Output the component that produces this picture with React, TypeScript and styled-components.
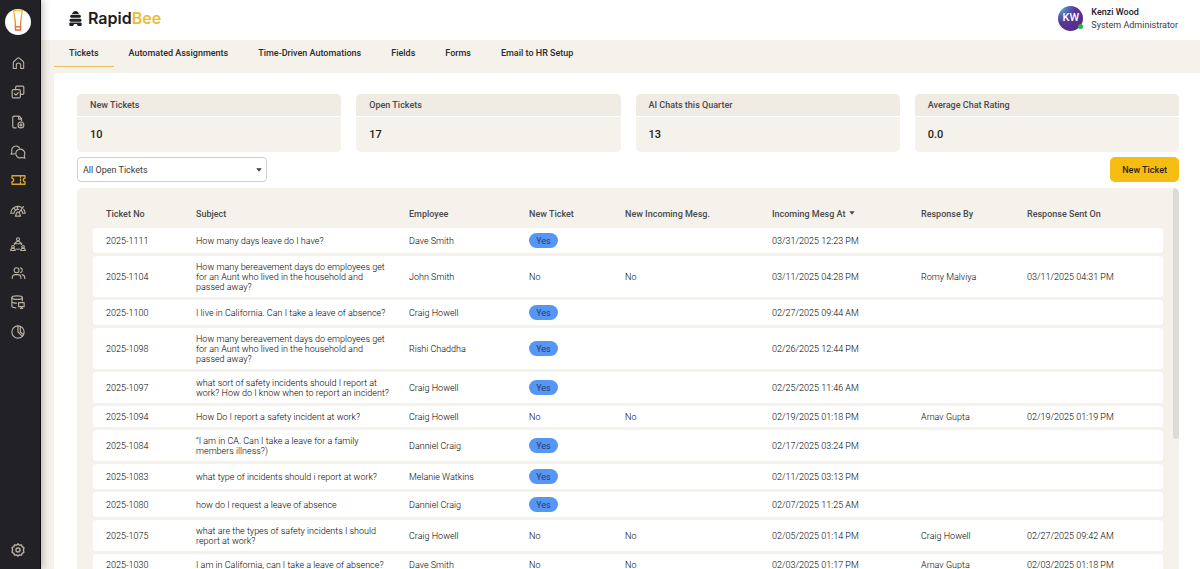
import React from "react";
import styled, { createGlobalStyle } from "styled-components";

const GlobalStyle = createGlobalStyle`
  *, *::before, *::after { box-sizing: border-box; }
  html, body, #root { height: 100%; }
  body {
    margin: 0;
    background: #f5f2eb;
    color: #3c3c40;
    font-family: Roboto, "Liberation Sans", sans-serif;
    font-size: 9px;
    line-height: 10px;
  }
  button, select { font: inherit; color: inherit; }
`;

const Shell = styled.div`
  display: flex;
  height: 100vh;
  overflow: hidden;
`;

const Sidebar = styled.aside`
  position: relative;
  z-index: 1;
  display: flex;
  flex-direction: column;
  align-items: center;
  flex: 0 0 41px;
  padding: 9px 4px 12px 0;
  background: #222126;
  border-right: 1px solid #0c0b0e;
  box-shadow: 2px 0 7px rgba(60, 50, 40, 0.3);
`;

const OrgBadge = styled.a`
  display: block;
  width: 26px;
  height: 26px;
  border-radius: 50%;
  background: #fff;
`;

const Nav = styled.nav`
  display: flex;
  flex: 1;
  flex-direction: column;
  align-items: center;
  gap: 16px;
  margin-top: 22px;
`;

const NavLink = styled.a<{ $active?: boolean }>`
  display: flex;
  color: ${(p) => (p.$active ? "#d9a52c" : "#b9b2a4")};
`;

const Content = styled.div`
  display: flex;
  flex: 1;
  flex-direction: column;
  min-width: 0;
`;

const Header = styled.header`
  display: flex;
  flex: 0 0 40px;
  align-items: center;
  justify-content: space-between;
  padding: 0 22px 4px 28px;
  background: #fff;
`;

const Brand = styled.a`
  display: flex;
  align-items: center;
  gap: 6px;
  color: #1d1c20;
  font-family: Inter, "Liberation Sans", sans-serif;
  font-size: 16px;
  font-weight: 600;
  line-height: 20px;
  text-decoration: none;
`;

const BrandAccent = styled.span`
  color: #ecbc35;
`;

const User = styled.div`
  display: flex;
  align-items: center;
  gap: 8px;
`;

const Avatar = styled.div`
  position: relative;
  width: 25px;
  height: 25px;
  border-radius: 50%;
  background: radial-gradient(circle at 12% 8%, #45b4e0 0, #5669b5 22%, #5a3596 46%, #4b2a80 100%);
  color: #fff;
  font-size: 11px;
  font-weight: 500;
  line-height: 23px;
  text-align: center;
`;

const Presence = styled.span`
  position: absolute;
  right: 0;
  bottom: 2px;
  width: 5px;
  height: 5px;
  border-radius: 50%;
  background: #35a853;
`;

const UserText = styled.div`
  display: flex;
  flex-direction: column;
  gap: 3px;
`;

const UserName = styled.span`
  color: #222;
  font-weight: 500;
`;

const Tabs = styled.nav`
  display: flex;
  flex: 0 0 27px;
  margin: 0 0 6px 13px;
`;

const Tab = styled.a<{ $active?: boolean }>`
  padding: 8px 15px 0;
  border-bottom: 1px solid ${(p) => (p.$active ? "#e8bf5c" : "transparent")};
  color: #2b2a2e;
  font-weight: 500;
  text-decoration: none;
  white-space: nowrap;
`;

const Panel = styled.main`
  display: flex;
  flex: 1;
  flex-direction: column;
  min-height: 0;
  margin-left: 13px;
  padding: 21px 21px 0 23px;
  border-radius: 4px 0 0 0;
  background: #fff;
`;

const Stats = styled.section`
  display: grid;
  flex: none;
  grid-template-columns: repeat(4, 1fr);
  gap: 15px;
`;

const StatCard = styled.article`
  overflow: hidden;
  border-radius: 5px;
  background: #f5f2eb;
`;

const StatTitle = styled.h2`
  margin: 0;
  padding: 6px 13px;
  border-bottom: 1px solid #fff;
  background: #f0ebe3;
  color: #4a494d;
  font-size: 9px;
  font-weight: 500;
  line-height: 10px;
`;

const StatValue = styled.p`
  margin: 0;
  padding: 11px 13px 10px;
  color: #1d1c20;
  font-size: 11px;
  font-weight: 500;
  line-height: 14px;
`;

const Toolbar = styled.div`
  display: flex;
  flex: none;
  align-items: center;
  justify-content: space-between;
  padding: 5px 0 6px;
`;

const SelectBox = styled.div`
  display: grid;
  align-items: center;
  width: 190px;

  > * { grid-area: 1 / 1; }
  > svg { justify-self: end; margin-right: 5px; pointer-events: none; }
`;

const ViewSelect = styled.select`
  appearance: none;
  width: 100%;
  height: 25px;
  padding: 0 5px;
  border: 1px solid #cfcfd4;
  border-radius: 4px;
  background: #fff;
`;

const PrimaryButton = styled.button`
  height: 25px;
  padding: 0 12px;
  border: 0;
  border-radius: 5px;
  background: #f5bd12;
  color: #2b220a;
  font-weight: 500;
`;

const TableArea = styled.section`
  display: flex;
  flex: 1;
  min-height: 0;
  overflow: hidden;
  border-radius: 5px 5px 0 0;
  background: #f5f2eb;
`;

const TableScroll = styled.div`
  flex: 1;
  overflow: hidden;
  padding: 15px 10px 0 16px;
`;

const Track = styled.div`
  flex: 0 0 6px;
`;

const Thumb = styled.div`
  height: 66%;
  border-radius: 3px;
  background: #dddbd8;
`;

const Table = styled.table`
  width: 100%;
  table-layout: fixed;
  border-collapse: separate;
  border-spacing: 0 3px;
`;

const Column = styled.col<{ $width: number }>`
  width: ${(p) => p.$width}px;
`;

const HeadCell = styled.th`
  padding: 3px 4px 6px 13px;
  color: #4a494d;
  font-weight: 500;
  text-align: left;
  white-space: nowrap;

  svg { margin-left: 4px; vertical-align: 2px; }
`;

const Cell = styled.td`
  padding: 6px 4px 5px 13px;
  background: #fff;
  color: #000;
  font-weight: 300;

  &:first-child { border-radius: 3px 0 0 3px; }
  &:last-child { border-radius: 0 3px 3px 0; }
`;

const FlagCell = styled(Cell)`
  padding-top: 5px;
`;

const Pill = styled.span`
  display: block;
  width: 29px;
  padding-top: 1px;
  border-radius: 8px;
  background: #5596f6;
  color: #26406e;
  font-weight: 400;
  line-height: 14px;
  text-align: center;
`;

type IconProps = { w: number; h: number; box?: string; sw?: number; children: React.ReactNode };

const Icon = ({ w, h, box = "0 0 24 24", sw = 2, children }: IconProps) => (
  <svg
    width={w}
    height={h}
    viewBox={box}
    fill="none"
    stroke="currentColor"
    strokeWidth={sw}
    strokeLinecap="round"
    strokeLinejoin="round"
    aria-hidden="true"
  >
    {children}
  </svg>
);

const Caret = () => (
  <svg width="6" height="4" viewBox="0 0 6 4" fill="currentColor" aria-hidden="true">
    <path d="M0.3 0.3h5.4L3 3.7z" />
  </svg>
);

const navItems = [
  {
    label: "Home",
    icon: (
      <Icon w={13} h={12} box="1 1 22 22">
        <path d="M2.5 11.500a3 3 0 0 1 1-2.300L10.400 3a2.400 2.400 0 0 1 3.200 0l6.900 6.200a3 3 0 0 1 1 2.300V22H16v-6a4 4 0 0 0-8 0v6H2.500z" />
      </Icon>
    ),
  },
  {
    label: "Tasks",
    icon: (
      <Icon w={14} h={14}>
        <rect x="2" y="8" width="14" height="14" rx="2" />
        <path d="M8 8V4a2 2 0 0 1 2-2h10a2 2 0 0 1 2 2v10a2 2 0 0 1-2 2h-4M6 15l2.500 2.500L12.500 13" />
      </Icon>
    ),
  },
  {
    label: "Documents",
    icon: (
      <Icon w={14} h={14}>
        <path d="M9 22H5a2 2 0 0 1-2-2V4a2 2 0 0 1 2-2h9l4 4v4M13 2v5h5" />
        <circle cx="17" cy="17" r="5" />
        <circle cx="17" cy="17" r="1.500" />
      </Icon>
    ),
  },
  {
    label: "Chats",
    icon: (
      <Icon w={16} h={14} box="0 0 28 25" sw={2}>
        <path d="M8.500 15.500 1.500 16.500 3.300 12.500A7.500 7.500 0 1 1 17.300 6.500" />
        <path d="M17.500 7.500A7.700 7.700 0 1 0 21 22.200L26.500 23.500 25 19A7.700 7.700 0 0 0 17.500 7.500z" />
      </Icon>
    ),
  },
  {
    label: "Tickets",
    active: true,
    icon: (
      <Icon w={15} h={10} box="0 0 30 20" sw={2.6}>
        <path d="M2 1.500h26v5a3.500 3.500 0 0 0 0 7v5H2v-5a3.500 3.500 0 0 0 0-7z" />
        <path d="M19 2v16" strokeDasharray="3 3.500" />
      </Icon>
    ),
  },
  {
    label: "Performance",
    icon: (
      <Icon w={16} h={20} box="0 0 28 28" sw={2}>
        <path d="M1.500 18A12.500 12.500 0 0 1 20 7.500M24 11a12.500 12.500 0 0 1 2.500 7h-4M1.500 18H7a7 7 0 0 1 8-6.800M7 9l2.500 3.500M13 6.500V10M23.500 6.500 15.500 17M9.500 23h9l-2-5.500a2.700 2.700 0 0 0-5 0zM20 13a8 8 0 0 1 2 5" />
      </Icon>
    ),
  },
  {
    label: "Organization",
    icon: (
      <Icon w={16} h={14} box="0 0 28 25" sw={2}>
        <circle cx="14" cy="4" r="2.700" />
        <circle cx="5" cy="17.500" r="2.300" />
        <circle cx="23" cy="17.500" r="2.300" />
        <path d="M9.500 12a4.500 4.500 0 0 1 9 0zM1 24a4 4 0 0 1 8 0zM19 24a4 4 0 0 1 8 0zM7.500 11v2.500M20.500 11v2.500M11.500 21.500a7 7 0 0 0 5 0" />
      </Icon>
    ),
  },
  {
    label: "People",
    icon: (
      <Icon w={15} h={12} box="0 1 27 22">
        <circle cx="10" cy="7" r="4.500" />
        <path d="M2 22v-1a6 6 0 0 1 6-6h4a6 6 0 0 1 6 6v1M17 2.600a4.500 4.500 0 0 1 0 8.800M20 15a6 6 0 0 1 5 6v1" />
      </Icon>
    ),
  },
  {
    label: "Data",
    icon: (
      <Icon w={14} h={14}>
        <ellipse cx="10.500" cy="4.500" rx="9" ry="3" />
        <path d="M1.500 4.500V19c0 1.700 3 2.800 7 3M19.500 4.500V10M1.500 11.500c1 2 4 2.500 8 2.500" />
        <path d="M13 13h9.500v7H13zM16 23h4M18 20v3" />
      </Icon>
    ),
  },
  {
    label: "Reports",
    icon: (
      <Icon w={14} h={14}>
        <circle cx="12" cy="12" r="10.500" />
        <path d="M12 1.500V12l7.500 7.500M16 2.500V12l5 4" />
      </Icon>
    ),
  },
];

const tabs = [
  "Tickets",
  "Automated Assignments",
  "Time-Driven Automations",
  "Fields",
  "Forms",
  "Email to HR Setup",
];

const stats = [
  ["New Tickets", "10"],
  ["Open Tickets", "17"],
  ["AI Chats this Quarter", "13"],
  ["Average Chat Rating", "0.0"],
];

const columns = [
  { label: "Ticket No", width: 90 },
  { label: "Subject", width: 213 },
  { label: "Employee", width: 120 },
  { label: "New Ticket", width: 96 },
  { label: "New Incoming Mesg.", width: 147 },
  { label: "Incoming Mesg At", width: 149, sorted: true },
  { label: "Response By", width: 106 },
  { label: "Response Sent On", width: 149 },
];

type Ticket = {
  no: string;
  subject: string;
  employee: string;
  received: string;
  responder?: string;
  sent?: string;
};

const tickets: Ticket[] = [
  { no: "2025-1111", subject: "How many days leave do I have?", employee: "Dave Smith", received: "03/31/2025 12:23 PM" },
  {
    no: "2025-1104",
    subject: "How many bereavement days do employees get for an Aunt who lived in the household and passed away?",
    employee: "John Smith",
    received: "03/11/2025 04:28 PM",
    responder: "Romy Malviya",
    sent: "03/11/2025 04:31 PM",
  },
  { no: "2025-1100", subject: "I live in California. Can I take a leave of absence?", employee: "Craig Howell", received: "02/27/2025 09:44 AM" },
  {
    no: "2025-1098",
    subject: "How many bereavement days do employees get for an Aunt who lived in the household and passed away?",
    employee: "Rishi Chaddha",
    received: "02/26/2025 12:44 PM",
  },
  {
    no: "2025-1097",
    subject: "what sort of safety incidents should I report at work? How do I know when to report an incident?",
    employee: "Craig Howell",
    received: "02/25/2025 11:46 AM",
  },
  {
    no: "2025-1094",
    subject: "How Do I report a safety incident at work?",
    employee: "Craig Howell",
    received: "02/19/2025 01:18 PM",
    responder: "Arnav Gupta",
    sent: "02/19/2025 01:19 PM",
  },
  { no: "2025-1084", subject: "“I am in CA. Can I take a leave for a family members illness?)", employee: "Danniel Craig", received: "02/17/2025 03:24 PM" },
  { no: "2025-1083", subject: "what type of incidents should i report at work?", employee: "Melanie Watkins", received: "02/11/2025 03:13 PM" },
  { no: "2025-1080", subject: "how do I request a leave of absence", employee: "Danniel Craig", received: "02/07/2025 11:25 AM" },
  {
    no: "2025-1075",
    subject: "what are the types of safety incidents I should report at work?",
    employee: "Craig Howell",
    received: "02/05/2025 01:14 PM",
    responder: "Craig Howell",
    sent: "02/27/2025 09:42 AM",
  },
  {
    no: "2025-1030",
    subject: "I am in California, can I take a leave of absence?",
    employee: "Dave Smith",
    received: "02/03/2025 01:17 PM",
    responder: "Arnav Gupta",
    sent: "02/03/2025 01:18 PM",
  },
];

const OrgMark = () => (
  <svg width="26" height="26" viewBox="0 0 26 26" fill="none" aria-hidden="true">
    <defs>
      <linearGradient id="org" x1="0" y1="0" x2="0" y2="22" gradientUnits="userSpaceOnUse">
        <stop offset="0.1" stopColor="#f2c43a" />
        <stop offset="1" stopColor="#e8603a" />
      </linearGradient>
    </defs>
    <path
      d="M8.700 1.500h8.600L15.600 14v7h-5.200v-7zM10.500 17.800h5"
      stroke="url(#org)"
      strokeWidth="1.400"
      strokeLinejoin="round"
    />
  </svg>
);

const HiveMark = () => (
  <svg width="13" height="15" viewBox="0 0 39 46" fill="#1d1c20" preserveAspectRatio="none" aria-hidden="true">
    <path d="M9 9C11 3 15 0 19.500 0S28 3 30 9z" />
    <path d="M8 11.500h23a4.500 4.500 0 0 1 0 9.500H8a4.500 4.500 0 0 1 0-9.500z" />
    <path d="M5 23.500h29a5 5 0 0 1 0 9.500H5a5 5 0 0 1 0-9.500z" />
    <path d="M4 35.500h31a3 3 0 0 1 3 3V43a3 3 0 0 1-3 3h-9c0-4-2-6-6.500-6S13 42 13 46H4a3 3 0 0 1-3-3v-4.500a3 3 0 0 1 3-3z" />
  </svg>
);

export default function App() {
  return (
    <>
      <GlobalStyle />
      <Shell>
        <Sidebar>
          <OrgBadge href="#" aria-label="Organization home">
            <OrgMark />
          </OrgBadge>
          <Nav aria-label="Main">
            {navItems.map((item) => (
              <NavLink key={item.label} href="#" aria-label={item.label} $active={item.active}>
                {item.icon}
              </NavLink>
            ))}
          </Nav>
          <NavLink href="#" aria-label="Settings">
            <Icon w={14} h={14} sw={2.4}>
              <path d="M12 1.500l2.500 2.200 3.400-.5 1.200 3.200 3 1.700-.8 3.900.8 3.900-3 1.700-1.200 3.200-3.400-.5-2.500 2.200-2.500-2.200-3.400.5-1.200-3.200-3-1.700.8-3.900-.8-3.900 3-1.700 1.200-3.200 3.400.5z" />
              <circle cx="12" cy="12" r="3.500" />
            </Icon>
          </NavLink>
        </Sidebar>
        <Content>
          <Header>
            <Brand href="#">
              <HiveMark />
              <span>
                Rapid<BrandAccent>Bee</BrandAccent>
              </span>
            </Brand>
            <User>
              <Avatar>
                KW
                <Presence />
              </Avatar>
              <UserText>
                <UserName>Kenzi Wood</UserName>
                <span>System Administrator</span>
              </UserText>
            </User>
          </Header>
          <Tabs aria-label="Ticket sections">
            {tabs.map((tab, i) => (
              <Tab key={tab} href="#" $active={i === 0}>
                {tab}
              </Tab>
            ))}
          </Tabs>
          <Panel>
            <Stats>
              {stats.map(([title, value]) => (
                <StatCard key={title}>
                  <StatTitle>{title}</StatTitle>
                  <StatValue>{value}</StatValue>
                </StatCard>
              ))}
            </Stats>
            <Toolbar>
              <SelectBox>
                <ViewSelect aria-label="Ticket view">
                  <option>All Open Tickets</option>
                </ViewSelect>
                <Caret />
              </SelectBox>
              <PrimaryButton type="button">New Ticket</PrimaryButton>
            </Toolbar>
            <TableArea>
              <TableScroll>
                <Table>
                  <colgroup>
                    {columns.map((c) => (
                      <Column key={c.label} $width={c.width} />
                    ))}
                  </colgroup>
                  <thead>
                    <tr>
                      {columns.map((c) => (
                        <HeadCell key={c.label} scope="col">
                          {c.label}
                          {c.sorted && <Caret />}
                        </HeadCell>
                      ))}
                    </tr>
                  </thead>
                  <tbody>
                    {tickets.map((t) => (
                      <tr key={t.no}>
                        <Cell>{t.no}</Cell>
                        <Cell>{t.subject}</Cell>
                        <Cell>{t.employee}</Cell>
                        <FlagCell>{t.responder ? "No" : <Pill>Yes</Pill>}</FlagCell>
                        <Cell>{t.responder ? "No" : ""}</Cell>
                        <Cell>{t.received}</Cell>
                        <Cell>{t.responder}</Cell>
                        <Cell>{t.sent}</Cell>
                      </tr>
                    ))}
                  </tbody>
                </Table>
              </TableScroll>
              <Track>
                <Thumb />
              </Track>
            </TableArea>
          </Panel>
        </Content>
      </Shell>
    </>
  );
}
